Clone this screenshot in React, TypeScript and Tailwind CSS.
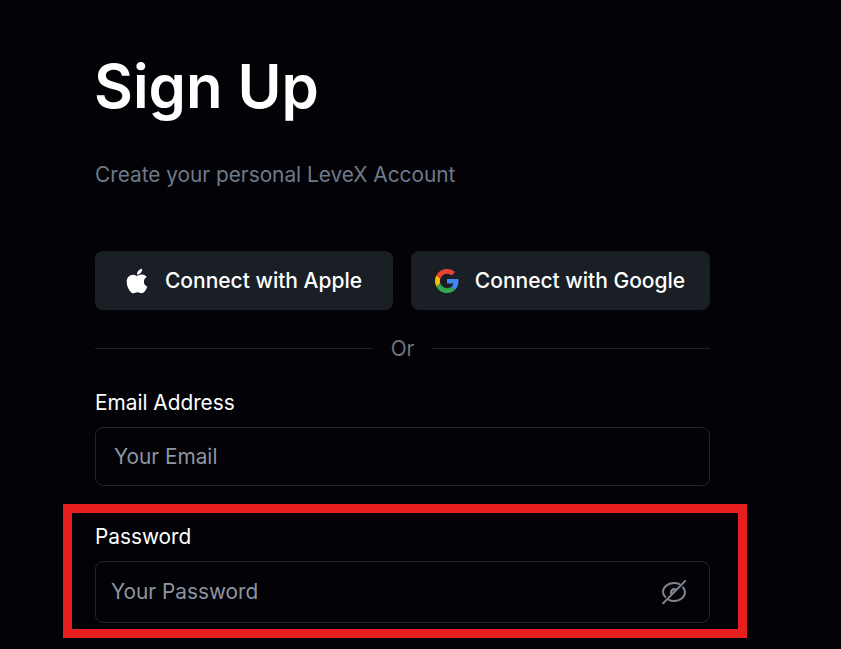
import { FaApple } from 'react-icons/fa';

function GoogleIcon() {
  return (
    <svg viewBox="0 0 48 48" className="w-6 h-6 -ml-px">
      <path fill="#EA4335" d="M24 9.500c3.500 0 6.700 1.200 9.200 3.600l6.900-6.900C35.900 2.400 30.500 0 24 0 14.600 0 6.500 5.400 2.600 13.200l8 6.200C12.500 13.700 17.800 9.500 24 9.500z" />
      <path fill="#4285F4" d="M47 24.500c0-1.600-.1-3.100-.4-4.500H24v9h12.900c-.6 3-2.200 5.400-4.700 7.100l7.700 6C44.400 38 47 31.800 47 24.500z" />
      <path fill="#FBBC05" d="M10.600 28.600c-.5-1.400-.8-3-.8-4.600s.3-3.200.8-4.600l-8-6.200C.9 16.500 0 20.100 0 24s.9 7.500 2.600 10.800l8-6.200z" />
      <path fill="#34A853" d="M24 48c6.500 0 11.900-2.100 15.900-5.900l-7.700-6c-2.200 1.400-4.900 2.300-8.200 2.300-6.200 0-11.500-4.200-13.400-9.800l-8 6.200C6.500 42.600 14.600 48 24 48z" />
    </svg>
  );
}

function EyeSlash() {
  return (
    <svg viewBox="0 0 24 24" fill="none" stroke="#7f858e" strokeWidth="2" strokeLinecap="round" className="w-6 h-6">
      <path d="M3.300 17C1.800 15.400 1 13.700 1 12 1 7.500 5.500 3 12 3c2 0 3.900.4 5.500 1.200" />
      <path d="M21 7.500c1.300 1.400 2 3 2 4.500 0 4.500-4.500 9-11 9-1.900 0-3.700-.4-5.200-1.100" />
      <path d="M9.300 13.300A3 3 0 0 1 13 9.400" strokeWidth="2.400" />
      <path d="M1 23.500 23.500.7" />
    </svg>
  );
}

export default function App() {
  return (
    <div className="relative w-[841px] h-[649px] overflow-hidden bg-[#020207] font-['Inter',sans-serif]">
      <div className="w-[615px] ml-[95px] pt-[48px]">
        <h1 className="text-[59.8px] leading-[76px] font-semibold text-white -ml-px">Sign Up</h1>
        <p className="mt-[36px] text-[20.8px] leading-[30px] text-[#6f7a88]">Create your personal LeveX Account</p>

        <div className="mt-[61px] flex gap-[18px]">
          <button className="w-[298px] h-[59px] rounded-lg bg-[#1a1f25] flex items-center justify-center gap-[14px] text-white text-[21px] font-medium">
            <FaApple className="w-[28px] h-[28px] -ml-[3px]" />
            Connect with Apple
          </button>
          <button className="flex-1 h-[59px] rounded-lg bg-[#1a1f25] flex items-center justify-center gap-[16px] text-white text-[21px] font-medium">
            <GoogleIcon />
            Connect with Google
          </button>
        </div>

        <div className="mt-[24px] flex items-center gap-[18px] h-[30px]">
          <div className="flex-1 h-px bg-[#1f2229] -mt-[2px]" />
          <span className="text-[20.8px] text-[#6f7680]">Or</span>
          <div className="flex-1 h-px bg-[#1f2229] -mt-[2px]" />
        </div>

        <label className="block mt-[24px] text-[20.8px] leading-[30px] text-white">Email Address</label>
        <div className="mt-[9px] h-[59px] rounded-lg border border-[#22252c] flex items-center px-[18px]">
          <span className="text-[20.8px] text-[#8d95a1]">Your Email</span>
        </div>

        <label className="block mt-[36px] text-[20.8px] leading-[30px] text-white">Password</label>
        <div className="mt-[9px] h-[62px] rounded-lg border border-[#22252c] flex items-center justify-between pl-[15px] pr-[23px]">
          <span className="text-[20.8px] text-[#8d95a1]">Your Password</span>
          <EyeSlash />
        </div>
      </div>

      {/* red highlight drawn over the screenshot */}
      <div className="absolute left-[63px] top-[504px] w-[684px] h-[134px] border-[9px] border-[#e61e1e]" />
    </div>
  );
}
